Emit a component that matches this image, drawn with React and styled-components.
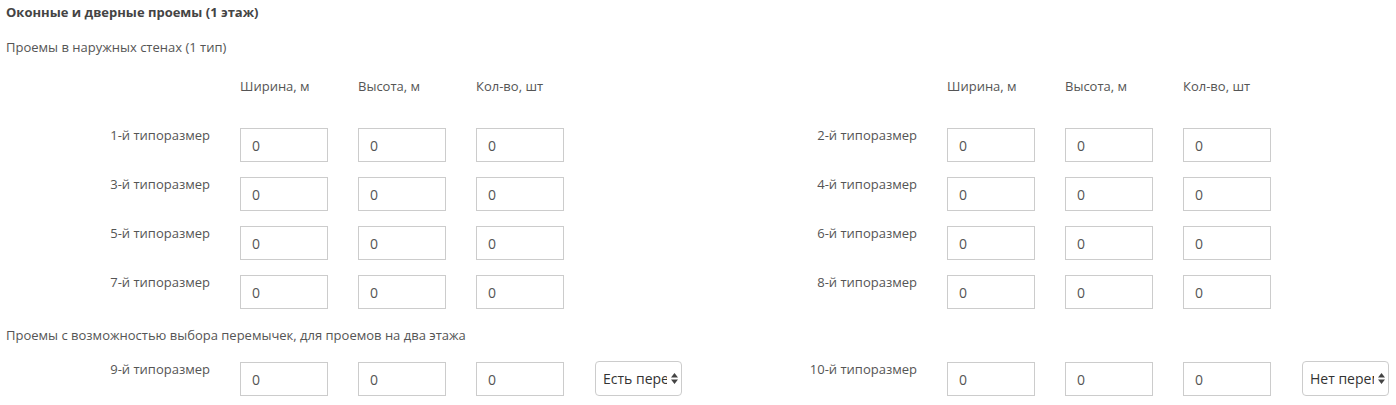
import React from "react";
import styled, { createGlobalStyle } from "styled-components";

const GlobalStyle = createGlobalStyle`
  body {
    margin: 0;
    background: #fff;
    font-family: "Open Sans", "Liberation Sans", sans-serif;
    font-size: 13px;
    color: #555;
  }
`;

const Page = styled.div`
  padding: 3px 0 0 6px;
  width: 1390px;
  overflow: hidden;
`;

const Title = styled.div`
  font-weight: 700;
  color: #444;
  line-height: 18px;
`;

const Subtitle = styled.div`
  line-height: 18px;
  margin-top: ${(p) => p.$top}px;
`;

const Halves = styled.div`
  display: grid;
  grid-template-columns: 707px 1fr;
  margin-top: ${(p) => p.$top}px;
`;

const Half = styled.div`
  display: flex;
  flex-direction: column;
  gap: 15px;
`;

const HeadRow = styled.div`
  display: flex;
  padding-left: 234px;
  gap: 30px;
  line-height: 18px;
  margin-bottom: 18px;
`;

const HeadCell = styled.div`
  width: 88px;
`;

const Row = styled.div`
  display: flex;
  align-items: flex-start;
  gap: 30px;
`;

const RowLabel = styled.div`
  width: 204px;
  text-align: right;
  line-height: 14px;
`;

const Input = styled.input`
  box-sizing: border-box;
  width: 88px;
  height: 34px;
  border: 1px solid #ccc;
  border-radius: 0;
  padding: 0 11px;
  font-family: inherit;
  font-size: 14px;
  color: #555;
  outline: none;
`;

const SelectWrap = styled.div`
  position: relative;
  width: 87px;
  height: 35px;
  margin-left: 1px;
  margin-top: -1px;
`;

const Select = styled.select`
  appearance: none;
  box-sizing: border-box;
  width: 100%;
  height: 100%;
  border: 1px solid #ccc;
  border-radius: 4px;
  background: #fff;
  padding: 0 14px 0 7px;
  font-family: inherit;
  font-size: 14px;
  color: #333;
  outline: none;
`;

const Arrows = styled.svg`
  position: absolute;
  right: 4px;
  top: 12px;
  pointer-events: none;
`;

const SizeRow = ({ n, option }) => (
  <Row>
    <RowLabel>{n}-й типоразмер</RowLabel>
    <Input defaultValue="0" />
    <Input defaultValue="0" />
    <Input defaultValue="0" />
    {option && (
      <SelectWrap>
        <Select defaultValue={option}>
          <option>Есть перемычки</option>
          <option>Нет перемычек</option>
        </Select>
        <Arrows width="7" height="11" viewBox="0 0 7 11">
          <path d="M3.5 0 L7 4.5 L0 4.5 Z M3.5 11 L7 6.5 L0 6.5 Z" fill="#444" />
        </Arrows>
      </SelectWrap>
    )}
  </Row>
);

const Header = () => (
  <HeadRow>
    <HeadCell>Ширина, м</HeadCell>
    <HeadCell>Высота, м</HeadCell>
    <HeadCell>Кол-во, шт</HeadCell>
  </HeadRow>
);

export default function App() {
  return (
    <>
      <GlobalStyle />
      <Page>
        <Title>Оконные и дверные проемы (1 этаж)</Title>
        <Subtitle $top={17}>Проемы в наружных стенах (1 тип)</Subtitle>
        <Halves $top={21}>
          <Half>
            <Header />
            {[1, 3, 5, 7].map((n) => (
              <SizeRow key={n} n={n} />
            ))}
          </Half>
          <Half>
            <Header />
            {[2, 4, 6, 8].map((n) => (
              <SizeRow key={n} n={n} />
            ))}
          </Half>
        </Halves>
        <Subtitle $top={17}>Проемы с возможностью выбора перемычек, для проемов на два этажа</Subtitle>
        <Halves $top={18}>
          <Half>
            <SizeRow n={9} option="Есть перемычки" />
          </Half>
          <Half>
            <SizeRow n={10} option="Нет перемычек" />
          </Half>
        </Halves>
      </Page>
    </>
  );
}
